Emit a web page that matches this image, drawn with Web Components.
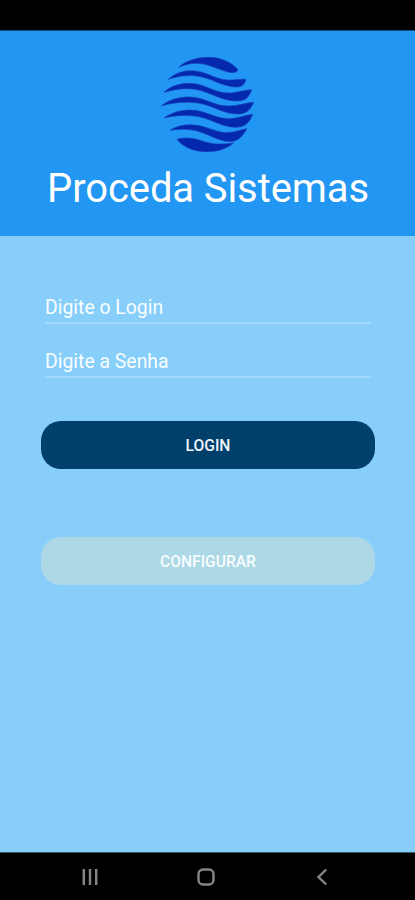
<!DOCTYPE html>
<html lang="pt-BR">
<head>
<meta charset="utf-8">
<title>Proceda Sistemas</title>
<style>
body {
  margin: 0;
  background: #000;
  font-family: Roboto, "Liberation Sans", sans-serif;
}
</style>
</head>
<body>
<login-screen>
  <app-header slot="header">Proceda Sistemas</app-header>
  <text-field>Digite o Login</text-field>
  <text-field>Digite a Senha</text-field>
  <round-button class="login">LOGIN</round-button>
  <round-button class="config" variant="light">CONFIGURAR</round-button>
  <nav-bar slot="nav"></nav-bar>
</login-screen>

<script>
class LoginScreen extends HTMLElement {
  constructor() {
    super();
    this.attachShadow({ mode: "open" }).innerHTML = `
<style>
:host {
  display: flex;
  flex-direction: column;
  height: 900px;
  overflow: hidden;
}
.status {
  height: 30px;
  border-bottom: 1px solid #16517f;
  background: #000;
}
main {
  flex: 1;
  display: flex;
  flex-direction: column;
  box-sizing: border-box;
  padding: 56px 40px 0 41px;
  background: #87cefa;
}
::slotted(.login) { margin-top: 21px; }
::slotted(.config) { margin-top: 68px; }
</style>
<div class="status"></div>
<slot name="header"></slot>
<main><slot></slot></main>
<slot name="nav"></slot>
`;
  }
}

class AppHeader extends HTMLElement {
  constructor() {
    super();
    this.attachShadow({ mode: "open" }).innerHTML = `
<style>
:host {
  display: flex;
  flex-direction: column;
  align-items: center;
  height: 205px;
  box-sizing: border-box;
  padding-top: 14px;
  background: #2196f3;
}
svg { display: block; flex: none; fill: #0529ae; stroke: #1a3dba; stroke-width: 2; }
h1 {
  margin: 4px 0 0 1px;
  font-size: 40px;
  line-height: 50px;
  font-weight: 400;
  letter-spacing: -0.1px;
  color: #fff;
  white-space: nowrap;
}
</style>
<svg width="115" height="115" viewBox="0 0 345 345">
  <path d="M86 67C108 47 141 37 174 37C211 37 244 51 264 74C260 84 246 85 227 79C196 70 171 55 139 55C118 55 102 60 86 67Z"/>
  <path d="M55 103C73 86 96 77 124 77C169 77 194 104 233 105C253 106 269 101 288 103C284 118 276 126 262 126C218 127 187 99 140 93C110 89 80 95 55 103Z"/>
  <path d="M42 142C63 123 87 115 119 115C169 116 194 147 241 144C266 142 282 135 305 134C299 152 290 164 273 167C222 173 187 143 142 134C106 127 73 133 42 142Z"/>
  <path d="M35 182C59 163 87 156 119 156C165 157 190 182 232 183C263 184 283 174 311 172C303 190 293 203 275 206C230 213 194 184 149 175C108 168 70 173 35 182Z"/>
  <path d="M42 219C67 202 91 195 123 195C167 196 195 221 236 221C264 221 283 211 308 208C300 228 291 241 272 245C228 254 191 224 147 215C107 208 72 212 42 219Z"/>
  <path d="M60 256C81 243 104 238 132 240C169 243 195 262 229 263C253 263 270 254 291 251C279 271 268 285 249 289C212 294 182 270 145 259C115 251 87 252 60 256Z"/>
  <path d="M81 283C105 276 131 279 154 287C189 300 218 298 251 294C230 311 204 320 174 320C136 321 101 309 81 283Z"/>
</svg>
<h1><slot></slot></h1>
`;
  }
}

class TextField extends HTMLElement {
  constructor() {
    super();
    this.attachShadow({ mode: "open" }).innerHTML = `
<style>
:host {
  display: flex;
  align-items: flex-end;
  height: 54px;
  box-sizing: border-box;
  padding: 0 4px 22px;
}
.field {
  flex: 1;
  height: 30px;
  line-height: 31px;
  font-size: 19.4px;
  color: #f8fdff;
  border-bottom: 2px solid #a3daff;
}
</style>
<div class="field"><slot></slot></div>
`;
  }
}

class RoundButton extends HTMLElement {
  constructor() {
    super();
    this.attachShadow({ mode: "open" }).innerHTML = `
<style>
:host {
  display: flex;
  align-items: center;
  justify-content: center;
  height: 48px;
  box-sizing: border-box;
  padding-top: 1px;
  border-radius: 20px;
  background: #00406b;
  color: #f0f6fb;
  font-size: 15.6px;
  font-weight: 500;
}
:host([variant="light"]) { background: #add8e6; color: #f8fdff; }
</style>
<slot></slot>
`;
  }
}

class NavBar extends HTMLElement {
  constructor() {
    super();
    this.attachShadow({ mode: "open" }).innerHTML = `
<style>
:host {
  display: flex;
  align-items: center;
  justify-content: space-between;
  height: 48px;
  box-sizing: border-box;
  padding: 0 83px 0 79px;
  border-top: 1px solid #38566a;
  background: #000;
}
svg { fill: none; stroke: #858585; stroke-width: 2.4; }
</style>
<svg width="22" height="20"><path d="M4.800 2v16M11 2v16M17.200 2v16"/></svg>
<svg width="22" height="20"><rect x="3.500" y="2.500" width="15" height="15" rx="4.500"/></svg>
<svg width="22" height="20"><path d="M16.200 2.500L8.500 10L16.200 17.500"/></svg>
`;
  }
}

customElements.define("login-screen", LoginScreen);
customElements.define("app-header", AppHeader);
customElements.define("text-field", TextField);
customElements.define("round-button", RoundButton);
customElements.define("nav-bar", NavBar);
</script>
</body>
</html>
